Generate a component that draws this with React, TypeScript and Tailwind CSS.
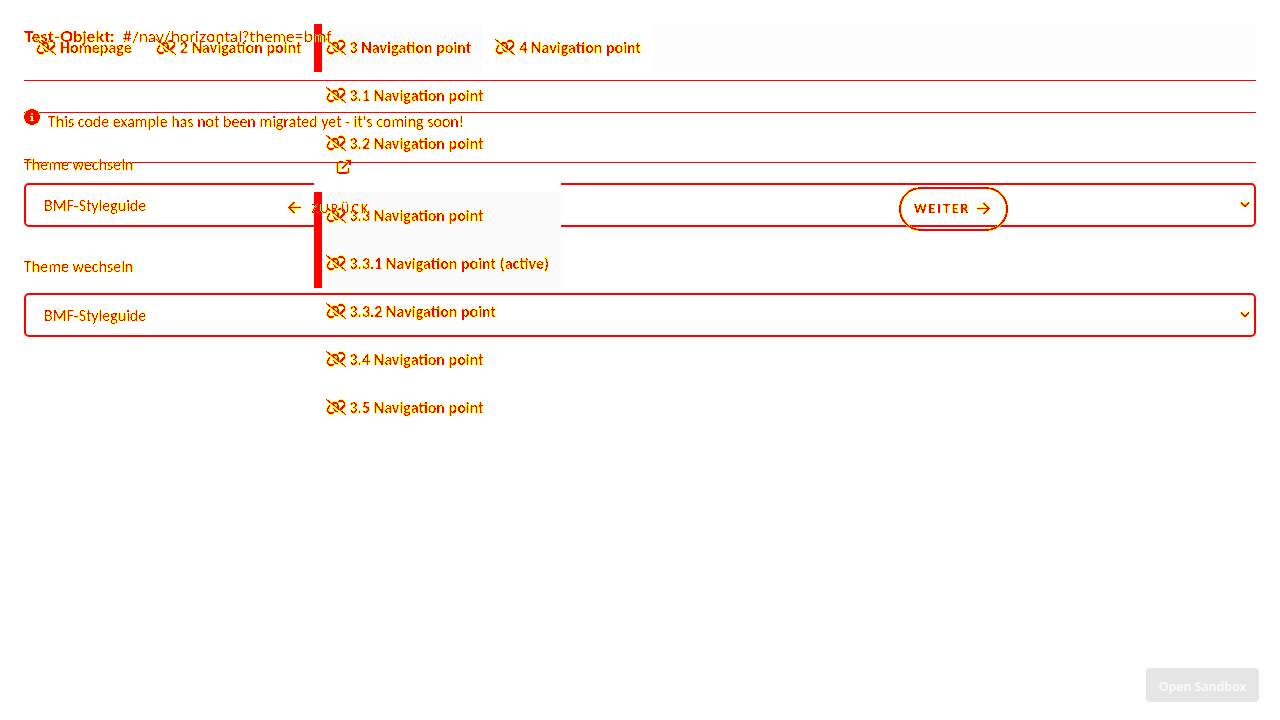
import type { ReactNode } from 'react';
import { FaLinkSlash, FaCircleInfo, FaChevronDown } from 'react-icons/fa6';

function EdgeFilters() {
  return (
    <svg className="absolute size-0" aria-hidden="true">
      <filter id="edge" colorInterpolationFilters="sRGB" x="-10%" y="-20%" width="120%" height="140%">
        <feColorMatrix values="0 0 0 0 1  0 0 0 -1 1  0 0 0 0 0  0 0 0 1 0" />
        <feComponentTransfer>
          <feFuncG type="discrete" tableValues="0 0 0 0 0 0 1 1 1 1 1 1 1 1 1 1" />
          <feFuncA type="discrete" tableValues="0 1 1 1 1 1 1 1 1 1 1 1 1 1 1 1" />
        </feComponentTransfer>
      </filter>
      <filter id="edge-icon" colorInterpolationFilters="sRGB" x="-10%" y="-20%" width="120%" height="140%">
        <feColorMatrix values="0 0 0 0 1  0 0 0 -1 1  0 0 0 0 0  0 0 0 1 0" />
        <feComponentTransfer>
          <feFuncG type="discrete" tableValues="0 0 0 0 1 1 1 1 1 1 1 1 1 1 1 1" />
          <feFuncA type="discrete" tableValues="0 1 1 1 1 1 1 1 1 1 1 1 1 1 1 1 1 1 1 1 1 1 1 1" />
        </feComponentTransfer>
      </filter>
    </svg>
  );
}

function Edge({ children, className = '' }: { children: ReactNode; className?: string }) {
  return <span className={`inline-flex items-center whitespace-pre text-black filter-[url(#edge)] ${className}`}>{children}</span>;
}

function NavItem({ label }: { label: string }) {
  return (
    <a className="flex h-12 items-center gap-1 px-3 font-bold">
      <FaLinkSlash className="-mt-0.5 h-4 w-5 text-black filter-[url(#edge-icon)]" />
      <span className="text-black filter-[url(#edge-icon)]">{label}</span>
    </a>
  );
}

function Select({ className = '' }: { className?: string }) {
  return (
    <div className={`flex h-11 items-center justify-between rounded-[5px] border-2 border-[#f00] pl-[18px] pr-1 ${className}`}>
      <Edge className="pt-0.5">BMF-Styleguide</Edge>
      <Edge className="-mt-0.5">
        <FaChevronDown className="size-[10px]" />
      </Edge>
    </div>
  );
}

function Arrow({ className = '' }: { className?: string }) {
  return (
    <svg viewBox="0 0 13 12" className={`h-3 w-[13px] ${className}`} fill="none" stroke="currentColor" strokeWidth="1.6">
      <path d="M0 6.500H12M6.500 1L12 6.500L6.500 12" />
    </svg>
  );
}

export default function App() {
  return (
    <div className="relative h-[720px] w-[1280px] overflow-hidden bg-white p-6 font-[Calibri,Carlito,Lato,sans-serif] text-base leading-6">
      <EdgeFilters />

      <header className="flex h-14 items-start">
        <Edge className="z-20 gap-2 font-[Lato,sans-serif]">
          <b className="tracking-[0.2px]">Test-Objekt:</b>
          <span className="tracking-[0.1px]">#/nav/horizontal?theme=bmf</span>
        </Edge>
      </header>
      <div className="h-8 border-t border-[#f00]" />
      <section className="flex h-[50px] items-start gap-2 border-t border-[#f00]">
        <Edge className="-mt-1">
          <FaCircleInfo className="size-4" />
        </Edge>
        <Edge className="-mt-[3px]">This code example has not been migrated yet - it's coming soon!</Edge>
      </section>
      <div className="border-t border-[#f00]" />
      <div className="-mt-2.5 flex h-6 items-center">
        <Edge className="w-[312px]">Theme wechseln</Edge>
        <Edge className="z-20 pt-1">
          <svg viewBox="0 0 16 16" className="size-4" fill="none" stroke="currentColor" strokeWidth="1.6">
            <path d="M7 3H3Q1.5 3 1.5 4.5V12.500Q1.500 14 3 14H11Q12.500 14 12.500 12.500V9M6 9.500L13.500 2M9.500 1.500H14V6" />
          </svg>
        </Edge>
      </div>
      <Select className="mt-1.5" />
      <div className="mt-7 flex h-6 items-center">
        <Edge>Theme wechseln</Edge>
      </div>
      <Select className="mt-3.5" />

      <nav className="absolute left-6 top-6 z-10 flex w-[1232px]">
        <NavItem label="Homepage" />
        <NavItem label="2 Navigation point" />
        <div className="relative border-l-8 border-[#f00] bg-[#fcfcfc] [&>a]:-ml-2">
          <NavItem label="3 Navigation point" />
          <div className="absolute -left-2 top-12 flex flex-col whitespace-nowrap">
            <NavItem label="3.1 Navigation point" />
            <NavItem label="3.2 Navigation point" />
            <div className="mt-2 h-4 bg-white" />
            <div className="border-l-8 border-[#f00] bg-[#fbfbfb] [&>a]:-ml-2">
              <NavItem label="3.3 Navigation point" />
              <NavItem label="3.3.1 Navigation point (active)" />
            </div>
            <NavItem label="3.3.2 Navigation point" />
            <NavItem label="3.4 Navigation point" />
            <NavItem label="3.5 Navigation point" />
          </div>
        </div>
        <NavItem label="4 Navigation point" />
        <div className="h-12 grow bg-[#fdfdfd]" />
      </nav>

      <div className="absolute left-[288px] top-[187px] z-20 flex h-11 w-[720px] items-center justify-between text-sm">
        <Edge className="gap-2.5 tracking-[2.1px]">
          <Arrow className="-mt-0.5 rotate-180" />
          ZURÜCK
        </Edge>
        <Edge className="h-11 w-[109px] gap-[7px] rounded-[22px] border-2 border-black pl-[13px] font-bold tracking-[1.9px]">
          WEITER
          <Arrow className="-mt-0.5" />
        </Edge>
      </div>

      <button className="absolute bottom-[18px] right-[21px] flex h-[34px] w-[113px] items-center justify-center rounded bg-[#e6e6e6] pt-[3px] font-['Noto_Sans',sans-serif] text-[12.4px] font-semibold text-[#fbfbfb]">
        Open Sandbox
      </button>
    </div>
  );
}
